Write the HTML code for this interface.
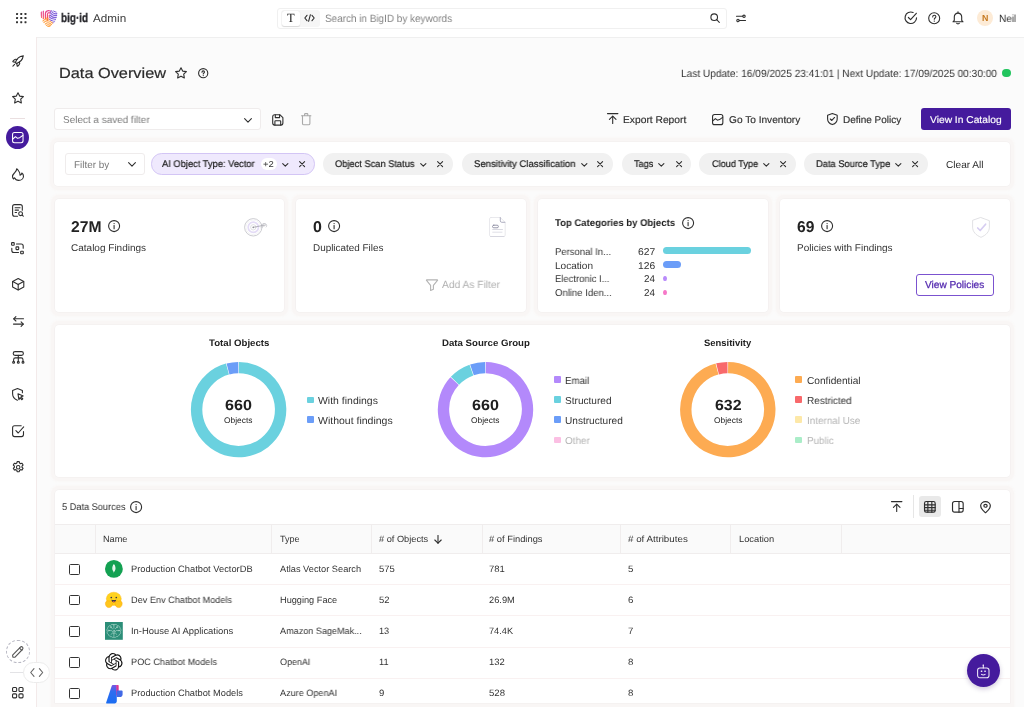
<!DOCTYPE html>
<html lang="en">
<head>
<meta charset="utf-8">
<title>BigID Admin - Data Overview</title>
<style>
*{box-sizing:border-box;margin:0;padding:0}
html,body{width:1024px;height:707px;overflow:hidden;background:#fbfbfb;font-family:"Liberation Sans",sans-serif;color:#2a2a2a;font-size:10.4px}
#top{position:absolute;left:0;top:0;width:1024px;height:37.5px;background:#fff;border-bottom:1px solid #efefef}
#side{position:absolute;left:0;top:37px;width:37px;height:670px;background:#fff;border-right:1px solid #f3eaea}
.t{text-rendering:geometricPrecision;will-change:transform;position:absolute;white-space:nowrap;line-height:14px;height:14px;margin-top:-7px;font-size:10.4px;color:#2e2e2e}
.b{font-weight:bold}
.g{color:#777}
.card{position:absolute;background:#fff;border-radius:4px;box-shadow:0 0 0 .6px #f1eeee,0 0 0 4px #f9f6f5,0 0 2px 4.500px #faf8f7}
.box{position:absolute;background:#fff;border:1px solid #efecec;border-radius:3px}
.chip{position:absolute;height:21.4px;top:153.3px;border-radius:10.7px;background:#f1f1f1}
svg{position:absolute;overflow:visible}
.ic{fill:none;stroke:#2e2e2e;stroke-width:1.1;stroke-linecap:round;stroke-linejoin:round}
.hl{position:absolute;height:1px;background:#f9f1f1}
.vl{position:absolute;width:1px;background:#f0eded}
.sq{position:absolute;width:6.6px;height:6.6px;border-radius:1px}
.cb{position:absolute;left:69px;width:10.6px;height:10.6px;border:1.4px solid #333;border-radius:1.5px;background:#fff}
</style>
</head>
<body>
<div id="top"></div>
<div id="side"></div>
<!--HEADER-->
<!-- app grid dots -->
<svg style="left:15.9px;top:12.8px" width="10.6" height="10.2" viewBox="0 0 10.6 10.2"><g fill="#333"><rect x="0" y="0" width="2" height="2" rx=".4"/><rect x="4.25" y="0" width="2" height="2" rx=".4"/><rect x="8.5" y="0" width="2" height="2" rx=".4"/><rect x="0" y="4.1" width="2" height="2" rx=".4"/><rect x="4.25" y="4.1" width="2" height="2" rx=".4"/><rect x="8.5" y="4.1" width="2" height="2" rx=".4"/><rect x="0" y="8.2" width="2" height="2" rx=".4"/><rect x="4.25" y="8.2" width="2" height="2" rx=".4"/><rect x="8.5" y="8.2" width="2" height="2" rx=".4"/></g></svg>
<!-- logo -->
<svg style="left:39.800px;top:10px" width="17.600" height="17.200" viewBox="0 0 17.600 17.200">
<defs>
<clipPath id="shc"><path d="M.2 2.200C2.600.700 5.600 0 8.800 0s6.200.700 8.600 2.200c.3 3.600-.9 7-2.700 9.700-1.600 2.400-3.700 4.300-5.900 5.300-2.200-1-4.300-2.900-5.900-5.300C1.100 9.200-.1 5.800.2 2.200z"/></clipPath>
<clipPath id="cpk"><path d="M0 0h11.300L9.200 8.800 6.400 9.400 2 9.400 0 6z"/></clipPath>
<clipPath id="cpu"><path d="M10.400 0H17.600V12L13 13.500 8.700 9.200 9.900 5z"/></clipPath>
<clipPath id="cor"><path d="M1 9.300 5.300 8.800 7.300 6.500 9 9.300 14 13.200 12 17.200H5z"/></clipPath>
<linearGradient id="gpk" gradientUnits="userSpaceOnUse" x1="0" y1="0" x2="0" y2="9.500"><stop offset="0" stop-color="#e2439a"/><stop offset=".6" stop-color="#ee4b7c"/><stop offset="1" stop-color="#ff6a4a"/></linearGradient>
</defs>
<g clip-path="url(#shc)" fill="none" stroke-linecap="round">
<g clip-path="url(#cpk)" stroke="url(#gpk)" stroke-width="1.200">
<path d="M1.300 1v6.500"/><path d="M3.300 .500v8.500"/>
<path d="M5.400 9V4c0-2 1.500-3.400 3.300-3.400 1.500 0 2.500.700 3 1.700"/>
<path d="M7.400 9V4.500c0-1.100.700-1.900 1.600-1.900.8 0 1.300.500 1.500 1.100"/>
<path d="M9.300 8.500V5"/>
</g>
<g clip-path="url(#cpu)" stroke="#7f5edb" stroke-width="1.200">
<circle cx="15.800" cy="-.500" r="2.400"/><circle cx="15.800" cy="-.500" r="4.300"/><circle cx="15.800" cy="-.500" r="6.200"/><circle cx="15.800" cy="-.500" r="8.100"/><circle cx="15.800" cy="-.500" r="10"/><circle cx="15.800" cy="-.500" r="11.900"/><circle cx="15.800" cy="-.500" r="13.800"/>
</g>
<g clip-path="url(#cor)" stroke="#ffa040" stroke-width="1.100">
<path d="M7.400 6.500v4" stroke="#ff6040" stroke-width="1.600"/>
<path d="M2.500 11.400c2-2.200 4-2.600 5.200-2.600 1.600 0 3.400.700 5.600 3" />
<path d="M3.400 13c1.500-1.700 3-2.200 4.400-2.200 1.500 0 3 .600 4.700 2.400"/>
<path d="M4.800 14.500c1-1.200 2-1.700 3.200-1.700s2.300.500 3.500 1.900"/>
<path d="M6 15.900c.700-.800 1.400-1.200 2.200-1.200.900 0 1.600.400 2.400 1.300"/>
<path d="M7.400 16.800c.400-.300.800-.500 1.200-.500s.800.200 1.200.600"/>
</g>
</g></svg>
<span class="t b" style="left:61.2px;font-size:12.6px;color:#26262b;-webkit-text-stroke:.3px #26262b;top:17.60px;transform-origin:0 50%;transform:scaleX(0.7905)">big·id</span>
<span class="t" style="left:93.4px;font-size:11.2px;color:#3a3a3a;top:18.60px;transform-origin:0 50%;transform:scaleX(1.0467)">Admin</span>
<!-- search -->
<div class="box" style="left:277px;top:7.5px;width:449.500px;height:21.2px;border-color:#f0f0f0"></div>
<div style="position:absolute;left:280.500px;top:10px;width:39.500px;height:16.500px;background:#f6f6f6;border-radius:3px"></div>
<div style="position:absolute;left:281.500px;top:10.8px;width:18.500px;height:15px;background:#fff;border-radius:2.500px;box-shadow:0 .5px 1px rgba(0,0,0,.12)"></div>
<span class="t" style="left:286.700px;top:18.300px;font-family:'Liberation Serif',serif;font-size:12.500px;color:#222">T</span>
<svg style="left:304px;top:14.300px" width="11" height="8" viewBox="0 0 11 8"><g class="ic" stroke-width="1"><path d="M3 1.300 .8 4 3 6.700"/><path d="M8 1.300 10.200 4 8 6.700"/><path d="M6.400.7 4.600 7.300"/></g></svg>
<span class="t" style="left:325.300px;font-size:10.6px;color:#858585;top:18.80px;transform-origin:0 50%;transform:scaleX(0.9377)">Search in BigID by keywords</span>
<svg style="left:710px;top:13.200px" width="10" height="10" viewBox="0 0 10 10"><g class="ic" stroke-width="1"><circle cx="4.200" cy="4.200" r="3.300"/><path d="M6.700 6.700 9.300 9.300"/></g></svg>
<svg style="left:735.500px;top:13.500px" width="10" height="9" viewBox="0 0 10 9"><g class="ic" stroke-width=".9"><path d="M.5 2.300h6.300"/><circle cx="8" cy="2.300" r="1.200"/><path d="M9.500 6.500H3.200"/><circle cx="2" cy="6.500" r="1.200"/></g></svg>
<!-- right icons -->
<svg style="left:904.100px;top:11.200px" width="13.600" height="13.600" viewBox="0 0 13 13"><g class="ic" stroke-width="1.100"><path d="M12 6.500A5.500 5.500 0 1 1 8.700 1.450"/><path d="M4.200 6.200 6.300 8.300 11.800 2.200"/></g></svg>
<svg style="left:928px;top:11.800px" width="12.400" height="12.400" viewBox="0 0 12.400 12.400"><g class="ic" stroke-width="1.100"><circle cx="6.200" cy="6.200" r="5.500"/><path d="M4.700 4.900c0-1 .7-1.600 1.600-1.600s1.600.6 1.600 1.500c0 1.200-1.600 1.300-1.600 2.500"/></g><circle cx="6.300" cy="9.100" r=".7" fill="#2e2e2e"/></svg>
<svg style="left:952px;top:11.300px" width="12" height="13.400" viewBox="0 0 12 13.400"><g class="ic" stroke-width="1.100"><path d="M2.300 9.300V6A3.700 3.700 0 0 1 6 2.100 3.700 3.700 0 0 1 9.700 6v3.300l1.300 1.500H1z"/><path d="M6 .7v1.300"/><path d="M4.600 12.300c.3.400.8.600 1.400.6s1.100-.2 1.400-.6"/></g></svg>
<div style="position:absolute;left:977px;top:10px;width:16.400px;height:16.400px;border-radius:50%;background:#fdebd6"></div>
<span class="t b" style="left:982.100px;font-size:8.8px;color:#c4761b;top:18.30px">N</span>
<span class="t" style="left:999px;font-size:10.4px;color:#333;top:19.80px;transform-origin:0 50%;transform:scaleX(0.9661)">Neil</span>

<!--SIDEBAR-->
<!-- rocket -->
<svg style="left:12px;top:55px" width="12" height="12" viewBox="0 0 12 12"><g class="ic" stroke-width="1"><path d="M4.300 8.600 3.400 7.700C4.400 4.300 7.200 1.300 11.300.7c-.6 4.100-3.600 6.900-7 7.900z"/><path d="M3.600 7.200 1.300 6.900c-.5 0-.6-.5-.3-.8L2.300 4.800c.8-.7 1.900-.6 2.700-.2"/><path d="M4.800 8.400l.3 2.300c0 .5.500.6.800.3l1.300-1.300c.7-.8.600-1.900.2-2.700"/><path d="M2.600 9.400.9 11.100"/></g></svg>
<!-- star -->
<svg style="left:12.300px;top:92.300px" width="12" height="11.600" viewBox="0 0 12 11.600"><path class="ic" stroke-width="1.050" d="M6 .7 7.650 4.100 11.400 4.600 8.700 7.200 9.350 10.900 6 9.150 2.650 10.900 3.300 7.200 .6 4.600 4.350 4.100z"/></svg>
<div style="position:absolute;left:10px;top:117.500px;width:15px;height:1px;background:#eadfe0"></div>
<!-- active -->
<div style="position:absolute;left:5.800px;top:125.500px;width:23.400px;height:23.400px;border-radius:50%;background:#451b9d"></div>
<svg style="left:12.100px;top:132.200px" width="11.600" height="11.400" viewBox="0 0 11.600 11.400"><g fill="none" stroke="#fff" stroke-width="1.050" stroke-linecap="round" stroke-linejoin="round"><rect x=".55" y=".55" width="10.500" height="10.300" rx="2"/><path d="M.8 7 3.500 4.700 5.500 6.300 7.700 5.700 10.800 3.500"/></g></svg>
<!-- flame -->
<svg style="left:11.800px;top:168px" width="12.200" height="12.800" viewBox="0 0 12.200 12.800"><path class="ic" stroke-width="1.050" d="M4.700.800C4.900 2.600 3.600 3.800 2.400 5 1.200 6.200.500 7.200.500 8.600c0 1 .400 1.900 1.100 2.400 0-.600.400-1 1.100-1.100.600 1.700 2.200 2.500 4 2.500 2.700 0 4.800-1.800 4.800-4.200 0-1.300-.600-2.400-1.700-3.200 0 1.100-.700 2-1.700 2.300 0-1.700-.500-3.100-1.400-4.300C6.100 2.100 5.400 1.300 4.700.800z"/></svg>
<!-- doc search -->
<svg style="left:11.900px;top:204.400px" width="12" height="12.800" viewBox="0 0 12 12.800"><g class="ic" stroke-width="1.050"><path d="M5.500 12.200H2.600c-1.100 0-2-.9-2-2V2.600c0-1.100.9-2 2-2h5.700c1.100 0 2 .9 2 2v3.600"/><path d="M3.100 3.700h5"/><path d="M3.100 6.100h3.400"/><path d="M3.100 8.500h1.500"/><circle cx="8.600" cy="9.700" r="1.900"/><path d="M10.100 11.100l1.200 1.100"/></g></svg>
<!-- scan / connections -->
<svg style="left:11.400px;top:241.600px" width="13" height="12.400" viewBox="0 0 13 12.400"><g class="ic" stroke-width="1.050"><rect x=".6" y=".6" width="2.600" height="2.600" rx=".5"/><rect x="5" y="4.900" width="2.700" height="2.700" rx=".5"/><rect x="9.700" y="9.200" width="2.600" height="2.600" rx=".5"/><path d="M5.500 2h4.700c1.100 0 2 .9 2 2v2.300"/><path d="M7.500 10.500H2.800c-1.100 0-2-.9-2-2V6.300"/></g></svg>
<!-- cube -->
<svg style="left:11.800px;top:277.700px" width="12.400" height="12.600" viewBox="0 0 12.400 12.600"><g class="ic" stroke-width="1.050"><path d="M6.200.6 11.800 3.500V9.100L6.200 12 .6 9.100V3.500z"/><path d="M.8 3.600 6.200 6.400 11.600 3.600"/><path d="M6.200 6.400V11.800"/></g></svg>
<!-- arrows -->
<svg style="left:12.600px;top:315.500px" width="11" height="11" viewBox="0 0 11 11"><g class="ic" stroke-width="1.050"><path d="M10.500 2.800H.8"/><path d="M2.900.6.700 2.800 2.900 5"/><path d="M.5 8.100h9.700"/><path d="M8.100 5.900l2.200 2.200-2.200 2.200"/></g></svg>
<!-- hierarchy -->
<svg style="left:11.700px;top:350.900px" width="12.600" height="13" viewBox="0 0 12.600 13"><g class="ic" stroke-width="1.050"><rect x="1.200" y=".6" width="10.200" height="3.800" rx="1.900"/><path d="M6.300 4.400V10.300"/><path d="M1.600 10.300V8.700c0-1 .8-1.800 1.800-1.800h5.800c1 0 1.800.8 1.800 1.800v1.600"/><circle cx="1.600" cy="11.300" r=".95"/><circle cx="6.300" cy="11.300" r=".95"/><circle cx="11" cy="11.300" r=".95"/></g></svg>
<!-- shield cursor -->
<svg style="left:11.900px;top:388px" width="12" height="13" viewBox="0 0 12 13"><g class="ic" stroke-width="1.050"><path d="M5.400 12.300C2.600 11.100.6 8.900.6 5.800V2.500L5.500.6l4.900 1.900v2.300"/><path d="M6 5.800l5.200 2.100-2.100.9 1.700 2-1.100.9-1.700-2-1.100 1.900z"/></g></svg>
<!-- check square -->
<svg style="left:11.700px;top:424.800px" width="12.400" height="12.200" viewBox="0 0 12.400 12.200"><g class="ic" stroke-width="1.100"><path d="M11.500 6.500v3.100c0 1.100-.9 2-2 2H2.600c-1.100 0-2-.9-2-2V2.700c0-1.100.9-2 2-2h6.600"/><path d="M3.900 5.700 6.200 8 11.700 1.800"/></g></svg>
<!-- gear -->
<svg style="left:11.700px;top:460.900px" width="12.400" height="12.600" viewBox="0 0 12.400 12.600"><g class="ic" stroke-width="1.050"><circle cx="6.200" cy="6.300" r="1.750"/><path d="M5.150.6h2.100l.35 1.500 1 .55 1.450-.45 1.050 1.800-1.100 1.050v1.200l1.100 1.050-1.050 1.800-1.450-.45-1 .55-.35 1.500h-2.100l-.35-1.500-1-.55-1.450.45-1.050-1.800 1.100-1.050v-1.200L1.300 4 2.350 2.200l1.450.45 1-.55z"/></g></svg>
<!-- bottom: pencil -->
<div style="position:absolute;left:6.200px;top:639.700px;width:23.400px;height:23.400px;border-radius:50%;border:1px dashed #b9b9c4"></div>
<svg style="left:12px;top:645.500px" width="12" height="12" viewBox="0 0 12 12"><g class="ic" style="stroke:#555" stroke-width="1"><path d="M.9 11.100.6 9.200 8.200 1.300c.7-.7 1.700-.7 2.300-.1.600.6.600 1.600-.1 2.300L2.800 11.300z"/><path d="M7.500 2.100l2.300 2.300"/></g></svg>
<div style="position:absolute;left:10px;top:672px;width:14px;height:1px;background:#e3e3e6"></div>
<div style="position:absolute;left:22.800px;top:661.800px;width:27px;height:21.600px;border-radius:10.800px;background:#fff;border:1px solid #ececec"></div>
<svg style="left:29.800px;top:668.200px" width="13.400" height="9" viewBox="0 0 13.400 9"><g class="ic" style="stroke:#666" stroke-width="1"><path d="M4 .7.700 4.500 4 8.300"/><path d="M9.400.7l3.300 3.800-3.300 3.800"/></g></svg>
<!-- grid -->
<svg style="left:12.200px;top:686.700px" width="11.600" height="11.400" viewBox="0 0 11.600 11.400"><g class="ic" stroke-width="1.050"><rect x=".55" y=".55" width="4.100" height="4" rx="1"/><rect x="6.950" y=".55" width="4.100" height="4" rx="1"/><rect x=".55" y="6.850" width="4.100" height="4" rx="1"/><rect x="6.950" y="6.850" width="4.100" height="4" rx="1"/></g></svg>

<!--TITLE-->
<span class="t" style="left:59.300px;font-size:14.6px;line-height:20px;height:20px;margin-top:-10px;color:#2b2b2b;-webkit-text-stroke:.2px #2b2b2b;top:74.30px;transform-origin:0 50%;transform:scaleX(1.1180)">Data Overview</span>
<svg style="left:174.500px;top:67px" width="12" height="11.600" viewBox="0 0 12 11.600"><path class="ic" stroke-width="1.100" d="M6 .7 7.650 4.100 11.400 4.600 8.700 7.200 9.350 10.900 6 9.150 2.650 10.900 3.300 7.200 .6 4.600 4.350 4.100z"/></svg>
<svg style="left:197.500px;top:67.500px" width="10.400" height="10.400" viewBox="0 0 10.400 10.400"><g class="ic" stroke-width="1"><circle cx="5.200" cy="5.200" r="4.600"/><path d="M4 4.200c0-.8.500-1.300 1.250-1.300s1.250.5 1.250 1.150c0 .95-1.250 1-1.250 1.950"/></g><circle cx="5.250" cy="7.550" r=".6" fill="#2e2e2e"/></svg>
<span class="t" style="left:680.800px;font-size:10.5px;color:#333;top:73.75px;transform-origin:0 50%;transform:scaleX(0.9637)">Last Update: 16/09/2025 23:41:01 | Next Update: 17/09/2025 00:30:00</span>
<div style="position:absolute;left:1002.400px;top:68.500px;width:8.200px;height:8.200px;border-radius:50%;background:#22c55e"></div>
<!-- saved filter row -->
<div class="box" style="left:54px;top:108.300px;width:207px;height:22.200px"></div>
<span class="t" style="left:62.600px;font-size:10.0px;color:#7b7b7b;top:121.10px;transform-origin:0 50%;transform:scaleX(0.9935)">Select a saved filter</span>
<svg style="left:243.500px;top:117.600px" width="8" height="5" viewBox="0 0 8 5"><path class="ic" stroke-width="1.100" d="M.6.700 4 4.100 7.400.7"/></svg>
<!-- save icon -->
<svg style="left:271.700px;top:113.600px" width="11.600" height="11.800" viewBox="0 0 11.600 11.800"><g class="ic" stroke-width="1.200"><path d="M.7 2.700c0-1.100.9-2 2-2h5.100l3.100 3v5.400c0 1.100-.9 2-2 2H2.700c-1.100 0-2-.9-2-2z"/><path d="M3.300.9v2.700h4.300V.9"/><path d="M2.900 11V7.400c0-.4.300-.7.700-.7h4.400c.4 0 .7.300.7.700V11"/></g></svg>
<!-- trash -->
<svg style="left:300.500px;top:112.800px" width="10.400" height="12.400" viewBox="0 0 10.400 12.400"><g class="ic" style="stroke:#a9a9a9" stroke-width=".9"><path d="M.5 2.700h9.400"/><path d="M3.600 2.500V1.300c0-.4.300-.7.700-.7h1.800c.4 0 .7.300.7.700v1.200"/><path d="M1.500 2.900v7.500c0 .8.600 1.400 1.400 1.400h4.600c.8 0 1.400-.6 1.400-1.400V2.900"/></g></svg>
<!-- actions -->
<svg style="left:606.500px;top:113.300px" width="11.400" height="11" viewBox="0 0 11.400 11"><g class="ic" stroke-width="1"><path d="M.5.600h10.400"/><path d="M5.700 10.500V3.200"/><path d="M2.400 6.400 5.700 3.100 9 6.400"/></g></svg>
<span class="t" style="left:622.500px;font-size:9.9px;-webkit-text-stroke:.15px #2e2e2e;top:120.60px;transform-origin:0 50%;transform:scaleX(1.0388)">Export Report</span>
<svg style="left:711.600px;top:113.700px" width="11.400" height="11.200" viewBox="0 0 11.400 11.200"><g class="ic" stroke-width="1"><rect x=".55" y=".55" width="10.300" height="10.100" rx="2"/><path d="M.8 6.900 3.400 4.600 5.400 6.200 7.600 5.600 10.600 3.400"/></g></svg>
<span class="t" style="left:728.500px;font-size:9.9px;-webkit-text-stroke:.15px #2e2e2e;top:120.60px;transform-origin:0 50%;transform:scaleX(1.0254)">Go To Inventory</span>
<svg style="left:826.600px;top:113.300px" width="10.800" height="12.200" viewBox="0 0 10.800 12.200"><g class="ic" stroke-width="1"><path d="M5.400.6 10.200 2.300v3.600c0 2.700-1.900 4.700-4.800 5.700C2.500 10.600.6 8.600.6 5.900V2.300z"/><path d="M3.300 6 4.800 7.500 7.600 4.500"/></g></svg>
<span class="t" style="left:842.500px;font-size:9.9px;-webkit-text-stroke:.15px #2e2e2e;top:120.60px;transform-origin:0 50%;transform:scaleX(1.0097)">Define Policy</span>
<div style="position:absolute;left:920.700px;top:108.200px;width:90px;height:21.900px;border-radius:3px;background:#451b9d"></div>
<span class="t" style="left:930px;font-size:9.9px;color:#fff;-webkit-text-stroke:.15px #fff;top:120.60px;transform-origin:0 50%;transform:scaleX(1.0377)">View In Catalog</span>

<!--FILTERS-->
<div class="card" style="left:54px;top:142px;width:956.300px;height:44px"></div>
<div class="box" style="left:65.400px;top:153.300px;width:79.200px;height:21.400px"></div>
<span class="t" style="left:74.300px;font-size:9.9px;color:#777;top:165.70px;transform-origin:0 50%;transform:scaleX(0.9993)">Filter by</span>
<svg style="left:127.700px;top:162.300px" width="8" height="5" viewBox="0 0 8 5"><path class="ic" stroke-width="1.100" d="M.6.700 4 4.100 7.400.7"/></svg>
<!-- chip 1 -->
<div class="chip" style="left:150.500px;width:164.300px;background:#efe9fd;border:1px solid #d3c5f5"></div>
<span class="t" style="left:162.200px;font-size:9.7px;color:#222;-webkit-text-stroke:.2px #222;top:165.40px;transform-origin:0 50%;transform:scaleX(0.9624)">AI Object Type: Vector</span>
<div style="position:absolute;left:260.600px;top:158px;width:16.200px;height:12.300px;border-radius:6.200px;background:#fff"></div>
<span class="t" style="left:263.300px;font-size:8.6px;color:#333;top:164.20px;transform-origin:0 50%;transform:scaleX(1.1006)">+2</span>
<svg style="left:282.300px;top:162.800px" width="6.600" height="4" viewBox="0 0 6.600 4"><path class="ic" stroke-width=".85" d="M.7.600 3.300 3.100 5.900.6"/></svg>
<svg style="left:298.600px;top:161.300px" width="6.200" height="6.200" viewBox="0 0 6.200 6.200"><path class="ic" stroke-width=".9" d="M.6.600 5.600 5.600M5.600.6.600 5.600"/></svg>
<!-- chip 2 -->
<div class="chip" style="left:323.400px;width:129.700px"></div>
<span class="t" style="left:335.300px;font-size:9.7px;color:#222;-webkit-text-stroke:.2px #222;top:165.40px;transform-origin:0 50%;transform:scaleX(0.9586)">Object Scan Status</span>
<svg style="left:419.900px;top:162.800px" width="6.600" height="4" viewBox="0 0 6.600 4"><path class="ic" stroke-width=".85" d="M.7.600 3.300 3.100 5.900.6"/></svg>
<svg style="left:437px;top:161.300px" width="6.200" height="6.200" viewBox="0 0 6.200 6.200"><path class="ic" stroke-width=".9" d="M.6.600 5.600 5.600M5.600.6.600 5.600"/></svg>
<!-- chip 3 -->
<div class="chip" style="left:461.900px;width:151.200px"></div>
<span class="t" style="left:473.500px;font-size:9.7px;color:#222;-webkit-text-stroke:.2px #222;top:165.40px;transform-origin:0 50%;transform:scaleX(0.9828)">Sensitivity Classification</span>
<svg style="left:580.600px;top:162.800px" width="6.600" height="4" viewBox="0 0 6.600 4"><path class="ic" stroke-width=".85" d="M.7.600 3.300 3.100 5.900.6"/></svg>
<svg style="left:597px;top:161.300px" width="6.200" height="6.200" viewBox="0 0 6.200 6.200"><path class="ic" stroke-width=".9" d="M.6.600 5.600 5.600M5.600.6.600 5.600"/></svg>
<!-- chip 4 -->
<div class="chip" style="left:621.500px;width:69.400px"></div>
<span class="t" style="left:633.500px;font-size:9.7px;color:#222;-webkit-text-stroke:.2px #222;top:165.40px;transform-origin:0 50%;transform:scaleX(0.9478)">Tags</span>
<svg style="left:658.100px;top:162.800px" width="6.600" height="4" viewBox="0 0 6.600 4"><path class="ic" stroke-width=".85" d="M.7.600 3.300 3.100 5.900.6"/></svg>
<svg style="left:675.600px;top:161.300px" width="6.200" height="6.200" viewBox="0 0 6.200 6.200"><path class="ic" stroke-width=".9" d="M.6.600 5.600 5.600M5.600.6.600 5.600"/></svg>
<!-- chip 5 -->
<div class="chip" style="left:699.400px;width:96.200px"></div>
<span class="t" style="left:711.500px;font-size:9.7px;color:#222;-webkit-text-stroke:.2px #222;top:165.40px;transform-origin:0 50%;transform:scaleX(0.9438)">Cloud Type</span>
<svg style="left:763.200px;top:162.800px" width="6.600" height="4" viewBox="0 0 6.600 4"><path class="ic" stroke-width=".85" d="M.7.600 3.300 3.100 5.900.6"/></svg>
<svg style="left:780px;top:161.300px" width="6.200" height="6.200" viewBox="0 0 6.200 6.200"><path class="ic" stroke-width=".9" d="M.6.600 5.600 5.600M5.600.6.600 5.600"/></svg>
<!-- chip 6 -->
<div class="chip" style="left:804.100px;width:124.100px"></div>
<span class="t" style="left:815.800px;font-size:9.7px;color:#222;-webkit-text-stroke:.2px #222;top:165.40px;transform-origin:0 50%;transform:scaleX(0.9616)">Data Source Type</span>
<svg style="left:895px;top:162.800px" width="6.600" height="4" viewBox="0 0 6.600 4"><path class="ic" stroke-width=".85" d="M.7.600 3.300 3.100 5.900.6"/></svg>
<svg style="left:912.200px;top:161.300px" width="6.200" height="6.200" viewBox="0 0 6.200 6.200"><path class="ic" stroke-width=".9" d="M.6.600 5.600 5.600M5.600.6.600 5.600"/></svg>
<span class="t" style="left:945.600px;font-size:10.0px;color:#2e2e2e;top:165.60px;transform-origin:0 50%;transform:scaleX(1.0094)">Clear All</span>

<!--CARDS-->
<div class="card" style="left:54.500px;top:199px;width:229.800px;height:113px"></div>
<div class="card" style="left:296.400px;top:199px;width:229.800px;height:113px"></div>
<div class="card" style="left:538.400px;top:199px;width:229.800px;height:113px"></div>
<div class="card" style="left:780.200px;top:199px;width:229.700px;height:113px"></div>
<!-- card 1 -->
<span class="t b" style="left:71px;font-size:15.6px;line-height:20px;height:20px;margin-top:-10px;color:#222;top:227.80px;transform-origin:0 50%;transform:scaleX(1.0051)">27M</span>
<svg style="left:108px;top:220px" width="12.200" height="12.200" viewBox="0 0 12.200 12.200"><g class="ic" stroke-width="1"><circle cx="6.100" cy="6.100" r="5.500"/><path d="M6.100 5.500v3.300"/></g><circle cx="6.100" cy="3.600" r=".65" fill="#2e2e2e"/></svg>
<span class="t" style="left:71px;font-size:9.8px;color:#333;top:248.50px;transform-origin:0 50%;transform:scaleX(1.0213)">Catalog Findings</span>
<svg style="left:244px;top:217.800px" width="24" height="19" viewBox="0 0 24 19"><g fill="none" stroke-linecap="round"><circle cx="9.300" cy="9.300" r="8.700" stroke="#bfbfc5" stroke-width=".8"/><circle cx="9.300" cy="9.300" r="7.300" stroke="#ececee" stroke-width=".6"/><circle cx="9.300" cy="9.300" r="5.100" stroke="#e4dcf6" stroke-width="1.700"/><circle cx="9.300" cy="9.300" r="2.700" stroke="#d4d4d8" stroke-width=".7"/><circle cx="9.300" cy="9.300" r=".9" fill="#8f8f98" stroke="none"/><path d="M9.600 9.200 21.500 7" stroke="#9a9aa2" stroke-width=".7"/><path d="M19 5.800c1.600-.8 3-.3 3.500 1 .4 1 .2 1.700-.3 2.200" stroke="#b9b9c0" stroke-width=".7"/><path d="M17.500 6.600 19.800 6.100M18 8.500l2.400-.5" stroke="#b9b9c0" stroke-width=".6"/></g></svg>
<!-- card 2 -->
<span class="t b" style="left:312.900px;font-size:15.6px;line-height:20px;height:20px;margin-top:-10px;color:#222;top:227.80px;transform-origin:0 50%;transform:scaleX(1.0245)">0</span>
<svg style="left:328.200px;top:220px" width="12.200" height="12.200" viewBox="0 0 12.200 12.200"><g class="ic" stroke-width="1"><circle cx="6.100" cy="6.100" r="5.500"/><path d="M6.100 5.500v3.300"/></g><circle cx="6.100" cy="3.600" r=".65" fill="#2e2e2e"/></svg>
<span class="t" style="left:312.900px;font-size:9.8px;color:#333;top:248.50px;transform-origin:0 50%;transform:scaleX(1.0100)">Duplicated Files</span>
<svg style="left:489px;top:217.200px" width="17" height="20" viewBox="0 0 17 20"><g fill="none" stroke-linecap="round" stroke-linejoin="round"><path d="M2 .5h9.300l4.900 4.900V18c0 .8-.7 1.500-1.500 1.500H2c-.8 0-1.500-.7-1.500-1.500V2C.5 1.200 1.200.5 2 .5z" stroke="#e3e3e8" stroke-width=".8" fill="#fff"/><path d="M1.500 19.500h13.500" stroke="#d0d0da" stroke-width=".8"/><path d="M11.300.6v3.300c0 .8.600 1.400 1.400 1.400h3.200" stroke="#9b9bb0" stroke-width=".8"/><rect x="3.500" y="8.200" width="5.900" height="2.600" rx="1.300" stroke="#8b8ba0" stroke-width=".9" fill="#fff"/><path d="M3.700 12.500h9.800" stroke="#c9c9d4" stroke-width=".7"/><path d="M3.700 15.200h9.300" stroke="#d3d3dc" stroke-width=".7"/></g></svg>
<svg style="left:425.800px;top:278.700px" width="12" height="12" viewBox="0 0 12 12"><path class="ic" style="stroke:#b3b3b3" stroke-width=".95" d="M.7.900h10.600c.3 0 .4.300.2.500L7.400 6.300v3.900L4.600 11.500V6.300L.5 1.400C.3 1.200.4.900.7.900z"/></svg>
<span class="t" style="left:442.400px;font-size:10.4px;color:#b0b0b0;top:286.30px;transform-origin:0 50%;transform:scaleX(0.9846)">Add As Filter</span>
<!-- card 3 -->
<span class="t b" style="left:555.200px;font-size:9.8px;color:#222;top:224.40px;transform-origin:0 50%;transform:scaleX(0.9724)">Top Categories by Objects</span>
<svg style="left:681.900px;top:217.400px" width="12.200" height="12.200" viewBox="0 0 12.200 12.200"><g class="ic" stroke-width="1"><circle cx="6.100" cy="6.100" r="5.500"/><path d="M6.100 5.500v3.300"/></g><circle cx="6.100" cy="3.600" r=".65" fill="#2e2e2e"/></svg>
<span class="t" style="left:555.200px;font-size:9.9px;color:#333;top:252.65px;transform-origin:0 50%;transform:scaleX(0.9624)">Personal In...</span>
<span class="t" style="left:555.200px;font-size:9.9px;color:#333;top:266.50px;transform-origin:0 50%;transform:scaleX(1.0176)">Location</span>
<span class="t" style="left:555.200px;font-size:9.9px;color:#333;top:280.20px;transform-origin:0 50%;transform:scaleX(0.9548)">Electronic I...</span>
<span class="t" style="left:555.200px;font-size:9.9px;color:#333;top:294.00px;transform-origin:0 50%;transform:scaleX(0.9668)">Online Iden...</span>
<span class="t" style="left:638px;font-size:9.9px;color:#333;top:252.65px;transform-origin:0 50%;transform:scaleX(1.0434)">627</span>
<span class="t" style="left:638px;font-size:9.9px;color:#333;top:266.50px;transform-origin:0 50%;transform:scaleX(1.0434)">126</span>
<span class="t" style="left:644.300px;font-size:9.9px;color:#333;top:280.20px;transform-origin:0 50%;transform:scaleX(0.9923)">24</span>
<span class="t" style="left:644.300px;font-size:9.9px;color:#333;top:294.00px;transform-origin:0 50%;transform:scaleX(0.9923)">24</span>
<div style="position:absolute;left:663.400px;top:247.200px;width:88.100px;height:7px;border-radius:3.500px;background:#6ad1df"></div>
<div style="position:absolute;left:663.400px;top:261.200px;width:17.800px;height:7px;border-radius:3.500px;background:#6b9df8"></div>
<div style="position:absolute;left:663.400px;top:275.800px;width:3.600px;height:5.400px;border-radius:1.800px/2.700px;background:#b98bfb"></div>
<div style="position:absolute;left:663.400px;top:289.600px;width:3.600px;height:5.400px;border-radius:1.800px/2.700px;background:#f678c8"></div>
<!-- card 4 -->
<span class="t b" style="left:797.100px;font-size:15.6px;line-height:20px;height:20px;margin-top:-10px;color:#222;top:227.80px;transform-origin:0 50%;transform:scaleX(0.9908)">69</span>
<svg style="left:821.100px;top:220px" width="12.200" height="12.200" viewBox="0 0 12.200 12.200"><g class="ic" stroke-width="1"><circle cx="6.100" cy="6.100" r="5.500"/><path d="M6.100 5.500v3.300"/></g><circle cx="6.100" cy="3.600" r=".65" fill="#2e2e2e"/></svg>
<span class="t" style="left:797.100px;font-size:9.8px;color:#333;top:248.50px;transform-origin:0 50%;transform:scaleX(1.0208)">Policies with Findings</span>
<svg style="left:972px;top:217px" width="18" height="21" viewBox="0 0 18 21"><g fill="none" stroke-linecap="round" stroke-linejoin="round"><path d="M9 .6 17.400 3.700v6.400c0 4.600-3.300 8.100-8.400 10.200C3.900 18.200.6 14.700.6 10.100V3.700z" stroke="#d9d9dd" stroke-width=".8"/><path d="M5.700 11 8.200 13.500 13.600 7.200" stroke="#d6cdf1" stroke-width="1.700"/></g></svg>
<div style="position:absolute;left:916.200px;top:273.500px;width:77.400px;height:22.300px;border-radius:3px;border:1px solid #7b52cf;background:#fff"></div>
<span class="t" style="left:925.300px;font-size:10.1px;color:#5228ae;-webkit-text-stroke:.25px #5228ae;top:286.30px;transform-origin:0 50%;transform:scaleX(0.9986)">View Policies</span>

<!--CHARTS-->
<div class="card" style="left:54.500px;top:324.700px;width:955.400px;height:152.200px"></div>
<svg style="left:0;top:0" width="1024" height="707" viewBox="0 0 1024 707"><g fill="none" stroke-width="11.4"><path d="M238.89 367.60 A42.00 42.00 0 1 1 227.45 369.11" stroke="#6ad1df"/><path d="M228.01 368.96 A42.00 42.00 0 0 1 238.31 367.60" stroke="#6b9df8"/></g></svg>
<svg style="left:0;top:0" width="1024" height="707" viewBox="0 0 1024 707"><g fill="none" stroke-width="11.4"><path d="M485.79 367.60 A42.00 42.00 0 1 1 454.58 381.17" stroke="#b389fb"/><path d="M454.98 380.74 A42.00 42.00 0 0 1 471.41 370.03" stroke="#6ad1df"/><path d="M471.96 369.84 A42.00 42.00 0 0 1 485.21 367.60" stroke="#6b9df8"/></g></svg>
<svg style="left:0;top:0" width="1024" height="707" viewBox="0 0 1024 707"><g fill="none" stroke-width="11.4"><path d="M728.09 367.60 A42.00 42.00 0 1 1 717.00 369.01" stroke="#fdab52"/><path d="M717.57 368.87 A42.00 42.00 0 0 1 727.51 367.60" stroke="#f8696b"/></g></svg>
<span class="t b" style="left:208.6px;font-size:9.4px;color:#222;top:343.40px;transform-origin:0 50%;transform:scaleX(1.0289)">Total Objects</span>
<span class="t b" style="left:442.3px;font-size:9.4px;color:#222;top:343.40px;transform-origin:0 50%;transform:scaleX(1.0288)">Data Source Group</span>
<span class="t b" style="left:703.7px;font-size:9.4px;color:#222;top:343.40px;transform-origin:0 50%;transform:scaleX(1.0063)">Sensitivity</span>
<span class="t b" style="left:225.1px;font-size:14.8px;line-height:20px;height:20px;margin-top:-10px;color:#1e1e1e;top:406.40px;transform-origin:0 50%;transform:scaleX(1.0889)">660</span>
<span class="t b" style="left:472.0px;font-size:14.8px;line-height:20px;height:20px;margin-top:-10px;color:#1e1e1e;top:406.40px;transform-origin:0 50%;transform:scaleX(1.0889)">660</span>
<span class="t b" style="left:714.6px;font-size:14.8px;line-height:20px;height:20px;margin-top:-10px;color:#1e1e1e;top:406.40px;transform-origin:0 50%;transform:scaleX(1.0768)">632</span>
<span class="t" style="left:224.3px;font-size:8.2px;color:#222;top:421.00px;transform-origin:0 50%;transform:scaleX(1.0264)">Objects</span>
<span class="t" style="left:471.2px;font-size:8.2px;color:#222;top:421.00px;transform-origin:0 50%;transform:scaleX(1.0264)">Objects</span>
<span class="t" style="left:713.5px;font-size:8.2px;color:#222;top:421.00px;transform-origin:0 50%;transform:scaleX(1.0264)">Objects</span>
<div class="sq" style="left:307.1px;top:396.6px;background:#6ad1df"></div><span class="t" style="left:318.3px;font-size:10.1px;color:#333;top:401.85px;transform-origin:0 50%;transform:scaleX(1.0364)">With findings</span>
<div class="sq" style="left:307.1px;top:416.4px;background:#6b9df8"></div><span class="t" style="left:318.3px;font-size:10.1px;color:#333;top:421.85px;transform-origin:0 50%;transform:scaleX(1.0400)">Without findings</span>
<div class="sq" style="left:554.0px;top:376.3px;background:#b389fb"></div><span class="t" style="left:565.3px;font-size:10.1px;color:#333;top:381.75px;transform-origin:0 50%;transform:scaleX(0.9624)">Email</span>
<div class="sq" style="left:554.0px;top:396.4px;background:#6ad1df"></div><span class="t" style="left:565.3px;font-size:10.1px;color:#333;top:401.85px;transform-origin:0 50%;transform:scaleX(0.9962)">Structured</span>
<div class="sq" style="left:554.0px;top:416.4px;background:#6b9df8"></div><span class="t" style="left:565.3px;font-size:10.1px;color:#333;top:421.85px;transform-origin:0 50%;transform:scaleX(1.0001)">Unstructured</span>
<div class="sq" style="left:554.0px;top:436.5px;background:#fbbfe3"></div><span class="t" style="left:565.3px;font-size:10.1px;color:#b5b5b5;top:441.95px;transform-origin:0 50%;transform:scaleX(0.9782)">Other</span>
<div class="sq" style="left:795.1px;top:376.3px;background:#fdab52"></div><span class="t" style="left:806.5px;font-size:10.1px;color:#333;top:381.75px;transform-origin:0 50%;transform:scaleX(1.0054)">Confidential</span>
<div class="sq" style="left:795.1px;top:396.4px;background:#f8696b"></div><span class="t" style="left:806.5px;font-size:10.1px;color:#333;top:401.85px;transform-origin:0 50%;transform:scaleX(0.9838)">Restricted</span>
<div class="sq" style="left:795.1px;top:416.4px;background:#fde8a8"></div><span class="t" style="left:806.5px;font-size:10.1px;color:#b5b5b5;top:421.85px;transform-origin:0 50%;transform:scaleX(0.9794)">Internal Use</span>
<div class="sq" style="left:795.1px;top:436.5px;background:#aaedc8"></div><span class="t" style="left:806.5px;font-size:10.1px;color:#b5b5b5;top:441.95px;transform-origin:0 50%;transform:scaleX(0.9709)">Public</span>

<!--TABLE-->
<div class="card" style="left:54.500px;top:489.600px;width:955.400px;height:213.700px;border-radius:4px 4px 0 0;overflow:hidden">
<div style="position:absolute;left:0;top:34.800px;width:955.400px;height:29.200px;background:#fafafa;border-top:1px solid #f0eded;border-bottom:1px solid #f0eded"></div>
<div class="vl" style="left:40.1px;top:35.500px;height:28px"></div>
<div class="vl" style="left:216.5px;top:35.500px;height:28px"></div>
<div class="vl" style="left:316.4px;top:35.500px;height:28px"></div>
<div class="vl" style="left:427.2px;top:35.500px;height:28px"></div>
<div class="vl" style="left:565.0px;top:35.500px;height:28px"></div>
<div class="vl" style="left:675.3px;top:35.500px;height:28px"></div>
<div class="vl" style="left:786.1px;top:35.500px;height:28px"></div>
<div class="hl" style="left:0;top:94.7px;width:955.400px"></div>
<div class="hl" style="left:0;top:125.9px;width:955.400px"></div>
<div class="hl" style="left:0;top:157.1px;width:955.400px"></div>
<div class="hl" style="left:0;top:188.4px;width:955.400px"></div>
</div>
<span class="t" style="left:62.3px;font-size:9.8px;color:#2e2e2e;top:508.40px;transform-origin:0 50%;transform:scaleX(0.9403)">5 Data Sources</span>
<svg style="left:129.600px;top:500.700px" width="12.200" height="12.200" viewBox="0 0 12.200 12.200"><g class="ic" stroke-width="1"><circle cx="6.100" cy="6.100" r="5.500"/><path d="M6.100 5.500v3.300"/></g><circle cx="6.100" cy="3.600" r=".65" fill="#2e2e2e"/></svg>
<svg style="left:890.800px;top:501.100px" width="11.400" height="11" viewBox="0 0 11.400 11"><g class="ic" stroke-width="1"><path d="M.5.600h10.400"/><path d="M5.700 10.500V3.200"/><path d="M2.400 6.400 5.700 3.100 9 6.400"/></g></svg>
<div style="position:absolute;left:913.300px;top:495px;width:1px;height:22.500px;background:#e6e6e6"></div>
<div style="position:absolute;left:919.200px;top:495.800px;width:21.700px;height:21.600px;border-radius:3px;background:#e9e9e9"></div>
<svg style="left:924.300px;top:501.200px" width="11.700" height="11.700" viewBox="0 0 11.200 11.200"><g class="ic" stroke-width=".9"><rect x=".5" y=".5" width="10.200" height="10.200" rx="1.600"/><path d="M.5 3.700h10.200M.5 6.300h10.200M.5 8.900h10.200M3.700.5v10.200M7.500.5v10.200"/></g></svg>
<svg style="left:952.100px;top:501.200px" width="11.700" height="11.700" viewBox="0 0 11.200 11.200"><g class="ic" stroke-width="1"><rect x=".5" y=".5" width="10.200" height="10.200" rx="2"/><path d="M6.700.5v10.200M6.700 7.200h4"/></g></svg>
<svg style="left:980.300px;top:501px" width="11" height="12.400" viewBox="0 0 10 12.600" preserveAspectRatio="none"><g class="ic" stroke-width="1"><path d="M5 12C2.300 9.500.6 7.300.6 4.900A4.400 4.400 0 0 1 5 .600a4.400 4.400 0 0 1 4.400 4.300C9.400 7.300 7.700 9.500 5 12z"/><circle cx="5" cy="4.900" r="1.500"/></g></svg>
<span class="t" style="left:102.7px;font-size:9.0px;color:#333;top:539.20px;transform-origin:0 50%;transform:scaleX(1.0160)">Name</span>
<span class="t" style="left:280.0px;font-size:9.0px;color:#333;top:539.20px;transform-origin:0 50%;transform:scaleX(0.9992)">Type</span>
<span class="t" style="left:379.4px;font-size:9.0px;color:#333;top:539.20px;transform-origin:0 50%;transform:scaleX(1.0243)"># of Objects</span>
<svg style="left:433.500px;top:534.600px" width="8" height="9" viewBox="0 0 8 9"><g class="ic" stroke-width=".9"><path d="M4 .600V8.200"/><path d="M.8 5 4 8.200 7.200 5"/></g></svg>
<span class="t" style="left:489.4px;font-size:9.0px;color:#333;top:539.20px;transform-origin:0 50%;transform:scaleX(1.0382)"># of Findings</span>
<span class="t" style="left:627.6px;font-size:9.0px;color:#333;top:539.20px;transform-origin:0 50%;transform:scaleX(1.0863)"># of Attributes</span>
<span class="t" style="left:738.5px;font-size:9.0px;color:#333;top:539.20px;transform-origin:0 50%;transform:scaleX(1.0343)">Location</span>
<div class="cb" style="top:564.0px"></div>
<span class="t" style="left:130.7px;font-size:9.2px;color:#333;top:568.90px;transform-origin:0 50%;transform:scaleX(1.0132)">Production Chatbot VectorDB</span>
<span class="t" style="left:280.0px;font-size:9.2px;color:#333;top:568.90px;transform-origin:0 50%;transform:scaleX(1.0051)">Atlas Vector Search</span>
<span class="t" style="left:379.4px;font-size:9.2px;color:#333;top:568.90px;transform-origin:0 50%;transform:scaleX(1.0297)">575</span>
<span class="t" style="left:489.4px;font-size:9.2px;color:#333;top:568.90px;transform-origin:0 50%;transform:scaleX(1.0363)">781</span>
<span class="t" style="left:627.6px;font-size:9.2px;color:#333;top:568.90px;transform-origin:0 50%;transform:scaleX(1.0537)">5</span>
<div class="cb" style="top:594.7px"></div>
<span class="t" style="left:130.7px;font-size:9.2px;color:#333;top:599.90px;transform-origin:0 50%;transform:scaleX(0.9938)">Dev Env Chatbot Models</span>
<span class="t" style="left:280.0px;font-size:9.2px;color:#333;top:599.90px;transform-origin:0 50%;transform:scaleX(0.9930)">Hugging Face</span>
<span class="t" style="left:379.4px;font-size:9.2px;color:#333;top:599.90px;transform-origin:0 50%;transform:scaleX(1.0260)">52</span>
<span class="t" style="left:489.4px;font-size:9.2px;color:#333;top:599.90px;transform-origin:0 50%;transform:scaleX(1.0099)">26.9M</span>
<span class="t" style="left:627.6px;font-size:9.2px;color:#333;top:599.90px;transform-origin:0 50%;transform:scaleX(1.0537)">6</span>
<div class="cb" style="top:626.1px"></div>
<span class="t" style="left:130.7px;font-size:9.2px;color:#333;top:631.20px;transform-origin:0 50%;transform:scaleX(1.0272)">In-House AI Applications</span>
<span class="t" style="left:280.0px;font-size:9.2px;color:#333;top:631.20px;transform-origin:0 50%;transform:scaleX(0.9887)">Amazon SageMak...</span>
<span class="t" style="left:379.4px;font-size:9.2px;color:#333;top:631.20px;transform-origin:0 50%;transform:scaleX(0.9771)">13</span>
<span class="t" style="left:489.4px;font-size:9.2px;color:#333;top:631.20px;transform-origin:0 50%;transform:scaleX(0.9993)">74.4K</span>
<span class="t" style="left:627.6px;font-size:9.2px;color:#333;top:631.20px;transform-origin:0 50%;transform:scaleX(1.0537)">7</span>
<div class="cb" style="top:657.0px"></div>
<span class="t" style="left:130.7px;font-size:9.2px;color:#333;top:662.20px;transform-origin:0 50%;transform:scaleX(0.9906)">POC Chatbot Models</span>
<span class="t" style="left:280.0px;font-size:9.2px;color:#333;top:662.20px;transform-origin:0 50%;transform:scaleX(0.9757)">OpenAI</span>
<span class="t" style="left:379.4px;font-size:9.2px;color:#333;top:662.20px;transform-origin:0 50%;transform:scaleX(1.0056)">11</span>
<span class="t" style="left:489.4px;font-size:9.2px;color:#333;top:662.20px;transform-origin:0 50%;transform:scaleX(1.0297)">132</span>
<span class="t" style="left:627.6px;font-size:9.2px;color:#333;top:662.20px;transform-origin:0 50%;transform:scaleX(1.0537)">8</span>
<div class="cb" style="top:688.1px"></div>
<span class="t" style="left:130.7px;font-size:9.2px;color:#333;top:693.30px;transform-origin:0 50%;transform:scaleX(1.0097)">Production Chatbot Models</span>
<span class="t" style="left:280.0px;font-size:9.2px;color:#333;top:693.30px;transform-origin:0 50%;transform:scaleX(0.9893)">Azure OpenAI</span>
<span class="t" style="left:379.4px;font-size:9.2px;color:#333;top:693.30px;transform-origin:0 50%;transform:scaleX(1.0341)">9</span>
<span class="t" style="left:489.4px;font-size:9.2px;color:#333;top:693.30px;transform-origin:0 50%;transform:scaleX(1.0428)">528</span>
<span class="t" style="left:627.6px;font-size:9.2px;color:#333;top:693.30px;transform-origin:0 50%;transform:scaleX(1.0537)">8</span>
<svg style="left:105px;top:560.400px" width="17.800" height="17.800" viewBox="0 0 17.800 17.800"><circle cx="8.900" cy="8.900" r="8.900" fill="#13a152"/><path d="M8.900 4c1.100 1.400 1.600 2.800 1.600 4.300 0 1.800-.800 3-1.450 3.600l-.150 1.500-.150-1.500C8.100 11.300 7.300 10.100 7.300 8.300c0-1.500.500-2.900 1.600-4.300z" fill="#f3fbf6"/><path d="M8.900 6v6" stroke="#a9dcbd" stroke-width=".4"/></svg>
<svg style="left:104.900px;top:592.300px" width="17.600" height="15.800" viewBox="0 0 17.600 15.800">
<ellipse cx="8.800" cy="6.800" rx="7.500" ry="6.600" fill="#ffd21e" stroke="#ffb000" stroke-width=".4"/>
<circle cx="6.300" cy="5.500" r=".85" fill="#3a3b45"/><circle cx="11.300" cy="5.500" r=".85" fill="#3a3b45"/>
<path d="M6.300 7.700c.6 1.900 1.500 2.600 2.500 2.600s1.900-.7 2.500-2.600c-1.600.5-3.400.5-5 0z" fill="#3a3b45"/>
<path d="M7.800 9.700c.3-.6.600-.8 1-.8s.7.200 1 .8c-.6.900-1.400.9-2 0z" fill="#f0565a"/>
<path d="M.4 11.600c0-1.300.8-2.400 1.900-2.800.7-.2 1.300 0 1.700.5.400-.5 1-.7 1.700-.4 1 .4 1.700 1.400 1.800 2.600.2 2.200-1.300 4-3.600 4.100C1.800 15.700.4 13.900.4 11.600z" fill="#ffc61c" stroke="#ffa300" stroke-width=".45"/>
<path d="M17.200 11.600c0-1.300-.8-2.400-1.900-2.800-.7-.2-1.300 0-1.700.5-.4-.5-1-.7-1.700-.4-1 .4-1.700 1.400-1.800 2.600-.2 2.200 1.300 4 3.600 4.100 2.100.1 3.500-1.700 3.500-4z" fill="#ffc61c" stroke="#ffa300" stroke-width=".45"/>
</svg>
<svg style="left:105px;top:622.200px" width="17.800" height="17.800" viewBox="0 0 17.800 17.800"><rect width="17.800" height="17.800" fill="#2c8e78"/>
<g fill="none" stroke="#dff5ec" stroke-width=".6" stroke-linecap="round" stroke-linejoin="round" opacity=".72" transform="translate(8.900 8.900) scale(1.090) translate(-8.900 -8.900)">
<path d="M8.900 3.200c1.200-.6 2.700-.2 3.300.8 1.300.1 2.300 1.100 2.300 2.400.9.700 1.100 2 .5 3 .4 1.200-.1 2.500-1.300 3-.3 1.200-1.400 2-2.600 1.800-.6.700-1.500.9-2.200.6-.7.300-1.600.1-2.200-.6-1.200.2-2.300-.6-2.600-1.800-1.200-.5-1.700-1.800-1.300-3-.6-1-.4-2.300.5-3 0-1.300 1-2.300 2.300-2.400.6-1 2.100-1.400 3.300-.8z"/>
<path d="M8.900 3.400v3.100M6.300 5.700l1.400 1.300M11.500 5.700l-1.400 1.300M4.500 8.600h2.300l1.200 1.500M13.300 8.600H11l-1.200 1.500M6.200 12.200l1.300-1.200h2.800l1.300 1.200M8.900 11v3.300"/>
<circle cx="6" cy="5.400" r=".5"/><circle cx="11.800" cy="5.400" r=".5"/><circle cx="4.200" cy="8.600" r=".5"/><circle cx="13.600" cy="8.600" r=".5"/><circle cx="8.900" cy="8.900" r=".6"/>
</g></svg>
<svg style="left:105.200px;top:653.300px" width="17.600" height="17.600" viewBox="0 0 24 24"><path d="M22.2819 9.8211a5.9847 5.9847 0 0 0-.5157-4.9108 6.0462 6.0462 0 0 0-6.5098-2.9A6.0651 6.0651 0 0 0 4.9807 4.1818a5.9847 5.9847 0 0 0-3.9977 2.9 6.0462 6.0462 0 0 0 .7427 7.0966 5.98 5.98 0 0 0 .511 4.9107 6.051 6.051 0 0 0 6.5146 2.9001A5.9847 5.9847 0 0 0 13.2599 24a6.0557 6.0557 0 0 0 5.7718-4.2058 5.9894 5.9894 0 0 0 3.9977-2.9001 6.0557 6.0557 0 0 0-.7475-7.0729zm-9.022 12.6081a4.4755 4.4755 0 0 1-2.8764-1.0408l.1419-.0804 4.7783-2.7582a.7948.7948 0 0 0 .3927-.6813v-6.7369l2.02 1.1686a.071.071 0 0 1 .038.052v5.5826a4.504 4.504 0 0 1-4.4945 4.4944zm-9.6607-4.1254a4.4708 4.4708 0 0 1-.5346-3.0137l.142.0852 4.783 2.7582a.7712.7712 0 0 0 .7806 0l5.8428-3.3685v2.3324a.0804.0804 0 0 1-.0332.0615L9.74 19.9502a4.4992 4.4992 0 0 1-6.1408-1.6464zM2.3408 7.8956a4.485 4.485 0 0 1 2.3655-1.9728V11.6a.7664.7664 0 0 0 .3879.6765l5.8144 3.3543-2.0201 1.1685a.0757.0757 0 0 1-.071 0l-4.8303-2.7865A4.504 4.504 0 0 1 2.3408 7.872zm16.5963 3.8558L13.1038 8.364 15.1192 7.2a.0757.0757 0 0 1 .071 0l4.8303 2.7913a4.4944 4.4944 0 0 1-.6765 8.1042v-5.6772a.79.79 0 0 0-.407-.667zm2.0107-3.0231l-.142-.0852-4.7735-2.7818a.7759.7759 0 0 0-.7854 0L9.409 9.2297V6.8974a.0662.0662 0 0 1 .0284-.0615l4.8303-2.7866a4.4992 4.4992 0 0 1 6.6802 4.66zM8.3065 12.863l-2.02-1.1638a.0804.0804 0 0 1-.038-.0567V6.0742a4.4992 4.4992 0 0 1 7.3757-3.4537l-.142.0805L8.704 5.459a.7948.7948 0 0 0-.3927.6813zm1.0976-2.3654l2.602-1.4998 2.6069 1.4998v2.9994l-2.5974 1.4997-2.6067-1.4997Z" fill="#151515"/></svg>
<svg style="left:105.800px;top:684.500px" width="16.600" height="18.600" viewBox="0 0 16.600 18.600">
<defs><linearGradient id="az1" x1="0" y1="0" x2="0" y2="1"><stop offset="0" stop-color="#7a55e0"/><stop offset=".35" stop-color="#2f6df0"/><stop offset="1" stop-color="#1a6df2"/></linearGradient>
<linearGradient id="az2" x1="0" y1="0" x2="0" y2="1"><stop offset="0" stop-color="#e8388f"/><stop offset="1" stop-color="#b02bb0"/></linearGradient></defs>
<path d="M7.200 0h3.600v16c0 1.300-.9 2.400-2.200 2.400H.6c-.4 0-.6-.3-.5-.7L5.600 1.200C5.800.5 6.500 0 7.200 0z" fill="url(#az1)"/>
<path d="M10.300 0h1.600c.5 0 .8.300.8.800v5.200L10.300 11z" fill="url(#az2)"/>
<path d="M11.600 5.400h4.100c.5 0 .9.400.9.900v3.100c0 1.500-1.100 2.600-2.500 2.600h-3.300V6.200c0-.4.400-.8.800-.8z" fill="#4169e6"/>
</svg>
<div style="position:absolute;left:966.600px;top:653.700px;width:33.200px;height:33.200px;border-radius:50%;background:#451b9d;box-shadow:0 2px 5px rgba(40,10,90,.22)"></div>
<svg style="left:976.700px;top:663.600px" width="12.600" height="14.400" viewBox="0 0 12.600 14.400"><g fill="none" stroke="#efeaf8" stroke-width="1.050" stroke-linecap="round" stroke-linejoin="round"><rect x=".6" y="4" width="11.400" height="9.800" rx="2.300"/><path d="M6.300 4V1.800"/><path d="M4.500 10.400c.5.400 1.100.6 1.800.6s1.300-.2 1.800-.6"/></g><rect x="5.600" y=".4" width="1.400" height="1.500" rx=".4" fill="#efeaf8"/><rect x="3.800" y="6.500" width="1.500" height="1.600" rx=".3" fill="#efeaf8"/><rect x="7.300" y="6.500" width="1.500" height="1.600" rx=".3" fill="#efeaf8"/></svg>

</body>
</html>
